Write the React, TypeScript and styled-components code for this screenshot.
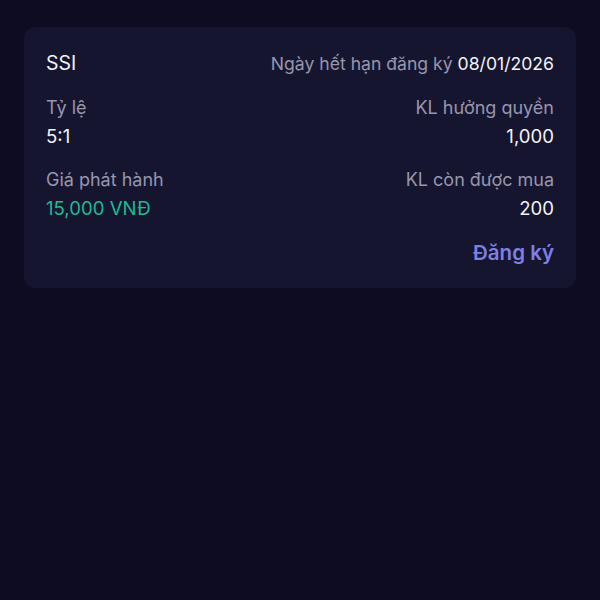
import styled, { createGlobalStyle } from 'styled-components'

const Global = createGlobalStyle`
  html, body {
    margin: 0;
    padding: 0;
    background: #0d0c23;
  }
  body {
    font-family: 'Inter', 'Noto Sans', sans-serif;
    -webkit-font-smoothing: antialiased;
  }
`

const Page = styled.div`
  width: 600px;
  height: 600px;
  background: #0d0c23;
  padding: 27px 24px 0;
  box-sizing: border-box;
`

const Card = styled.div`
  background: #161530;
  border-radius: 12px;
  padding: 24px 22px 21px;
  display: flex;
  flex-direction: column;
`

const Header = styled.div`
  display: flex;
  justify-content: space-between;
  align-items: center;
  height: 24px;
  margin-bottom: 21px;
`

const Ticker = styled.span`
  font-size: 19.5px;
  color: #f2f2f7;
`

const Expiry = styled.span`
  font-size: 17.6px;
  color: #9796ad;
  b {
    font-weight: 400;
    color: #f2f2f7;
  }
`

const Grid = styled.div`
  display: grid;
  grid-template-columns: 1fr 1fr;
  row-gap: 16px;
`

const Cell = styled.div<{ $right?: boolean }>`
  display: flex;
  flex-direction: column;
  align-items: ${p => (p.$right ? 'flex-end' : 'flex-start')};
`

const Label = styled.span`
  font-size: 18px;
  line-height: 24px;
  color: #9796ad;
`

const Value = styled.span<{ $green?: boolean }>`
  font-size: 18.6px;
  line-height: 32px;
  color: ${p => (p.$green ? '#1dbb93' : '#f2f2f7')};
`

const Footer = styled.div`
  display: flex;
  justify-content: flex-end;
  margin-top: 15px;
`

const RegisterButton = styled.button`
  background: none;
  border: none;
  padding: 0;
  font-family: inherit;
  font-size: 20.5px;
  line-height: 28px;
  font-weight: 600;
  color: #7d7fe3;
  cursor: pointer;
`

const items = [
  { label: 'Tỷ lệ', value: '5:1' },
  { label: 'KL hưởng quyền', value: '1,000', right: true },
  { label: 'Giá phát hành', value: '15,000 VNĐ', green: true },
  { label: 'KL còn được mua', value: '200', right: true },
]

export default function App() {
  return (
    <>
      <Global />
      <Page>
        <Card>
          <Header>
            <Ticker>SSI</Ticker>
            <Expiry>
              Ngày hết hạn đăng ký <b>08/01/2026</b>
            </Expiry>
          </Header>
          <Grid>
            {items.map((it, i) => (
              <Cell key={i} $right={it.right}>
                <Label>{it.label}</Label>
                <Value $green={it.green}>{it.value}</Value>
              </Cell>
            ))}
          </Grid>
          <Footer>
            <RegisterButton>Đăng ký</RegisterButton>
          </Footer>
        </Card>
      </Page>
    </>
  )
}
